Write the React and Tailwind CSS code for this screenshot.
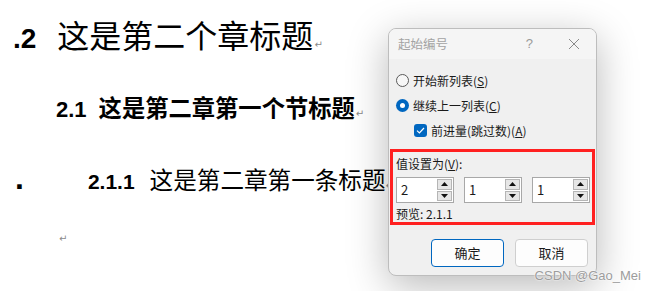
import React from 'react'

const cjk = { fontFamily: '"Noto Sans CJK SC", sans-serif' }
const lat = { fontFamily: '"Liberation Sans", Arial, sans-serif' }
const ui = { fontFamily: '"Noto Sans CJK SC", "Noto Sans", sans-serif' }

function Ret({ className = '' }) {
  return <span className={'text-[10px] leading-none text-[#8a8a8a] ' + className} style={{ fontFamily: '"DejaVu Sans", sans-serif' }}>↵</span>
}

function Spin({ value }) {
  return (
    <div className="flex h-[26px] w-[58px] items-stretch border border-[#a8a8a8] bg-white">
      <div className="flex flex-1 items-center pl-[4px] text-[13px] text-[#1a1a1a]">{value}</div>
      <div className="flex w-[16px] flex-col gap-[1px] py-[1px] pr-[1px]">
        <div className="flex flex-1 items-center justify-center border border-[#b5b5b5] bg-[#e6e6e6]">
          <svg width="7" height="4" viewBox="0 0 7 4"><path d="M3.5 0L7 4H0z" fill="#111" /></svg>
        </div>
        <div className="flex flex-1 items-center justify-center border border-[#b5b5b5] bg-[#e6e6e6]">
          <svg width="7" height="4" viewBox="0 0 7 4"><path d="M0 0H7L3.5 4z" fill="#111" /></svg>
        </div>
      </div>
    </div>
  )
}

function Dialog() {
  return (
    <div className="absolute left-[388px] top-[28px] h-[248px] w-[209px] overflow-hidden rounded-[8px] border border-[#bdbdbd] bg-[#f0f0f0] shadow-[0_10px_40px_rgba(0,0,0,0.28)]" style={ui}>
      {/* title bar */}
      <div className="flex h-[30px] items-center bg-[#f5f5f5] pl-[9px] pr-[16px] text-[12.5px] text-[#a3a3a3]">
        <span>起始编号</span>
        <span className="ml-auto mr-[35px] text-[13px] text-[#9a9a9a]" style={lat}>?</span>
        <svg width="12" height="12" viewBox="0 0 12 12"><path d="M1 1L11 11M11 1L1 11" stroke="#8a8a8a" strokeWidth="1" /></svg>
      </div>

      <div className="flex flex-col pt-[15px] text-[12px] text-[#1a1a1a]">
        <div className="flex h-[13px] items-center pl-[7px]">
          <span className="h-[13px] w-[13px] rounded-full border border-[#5a5a5a] bg-[#f7f7f7]" />
          <span className="ml-[4px]">开始新列表(<u>S</u>)</span>
        </div>
        <div className="mt-[12px] flex h-[13px] items-center pl-[7px]">
          <span className="flex h-[13px] w-[13px] items-center justify-center rounded-full bg-[#0067c0]">
            <span className="h-[5px] w-[5px] rounded-full bg-white" />
          </span>
          <span className="ml-[4px]">继续上一列表(<u>C</u>)</span>
        </div>
        <div className="mt-[12px] flex h-[13px] items-center pl-[25px]">
          <span className="flex h-[13px] w-[13px] items-center justify-center rounded-[3px] bg-[#0067c0]">
            <svg width="9" height="7" viewBox="0 0 9 7"><path d="M1 3.6L3.4 6L8 1" stroke="#fff" strokeWidth="1.2" fill="none" /></svg>
          </span>
          <span className="ml-[4px]">前进量(跳过数)(<u>A</u>)</span>
        </div>

        {/* highlighted group */}
        <div className="mx-[1px] mt-[12px] h-[76px] border-[3px] border-[#ff2020] pl-[3px]">
          <div className="mt-[4px] flex h-[16px] items-center">值设置为(<u>V</u>):</div>
          <div className="mt-[5px] flex gap-[10px]">
            <Spin value="2" />
            <Spin value="1" />
            <Spin value="1" />
          </div>
          <div className="mt-[3px] flex h-[16px] items-center">预览: 2.1.1</div>
        </div>

        <div className="mt-[14px] flex justify-end gap-[11px] pr-[8px] text-[13px]">
          <button className="h-[28px] w-[73px] rounded-[4px] border border-[#0067c0] bg-[#fdfdfd]">确定</button>
          <button className="h-[28px] w-[73px] rounded-[4px] border border-[#cfcfcf] bg-[#fdfdfd]">取消</button>
        </div>
      </div>
    </div>
  )
}

export default function App() {
  return (
    <div className="relative h-[291px] w-[657px] overflow-hidden bg-white text-black">
      {/* document */}
      <div className="flex flex-col">
        <div className="mt-[18px] flex h-[32px] items-baseline pl-[13px]">
          <span className="text-[28px] font-bold leading-none" style={lat}>.2</span>
          <span className="ml-[21px] text-[32px] leading-none" style={cjk}>这是第二个章标题</span>
          <Ret className="ml-[1px]" />
        </div>
        <div className="mt-[46px] flex h-[23px] items-baseline pl-[56px]">
          <span className="text-[22px] font-bold leading-none" style={lat}>2.1</span>
          <span className="ml-[12px] text-[23.3px] font-bold leading-none" style={cjk}>这是第二章第一个节标题</span>
          <Ret className="ml-[1px]" />
        </div>
        <div className="mt-[43px] flex h-[23px] items-baseline pl-[15px]">
          <span className="text-[32px] font-bold leading-none" style={lat}>.</span>
          <span className="ml-[64px] text-[21px] font-bold leading-none" style={lat}>2.1.1</span>
          <span className="ml-[15px] text-[23.6px] leading-none" style={cjk}>这是第二章第一条标题</span>
          <Ret />
        </div>
        <div className="mt-[39px] pl-[59px]">
          <Ret />
        </div>
      </div>

      <Dialog />

      <div className="absolute bottom-[9px] right-[16px] text-[13px] leading-none text-[#9c9c9c] [text-shadow:0_0_2px_#fff,0_0_1px_#fff]" style={lat}>
        CSDN @Gao_Mei
      </div>
    </div>
  )
}
